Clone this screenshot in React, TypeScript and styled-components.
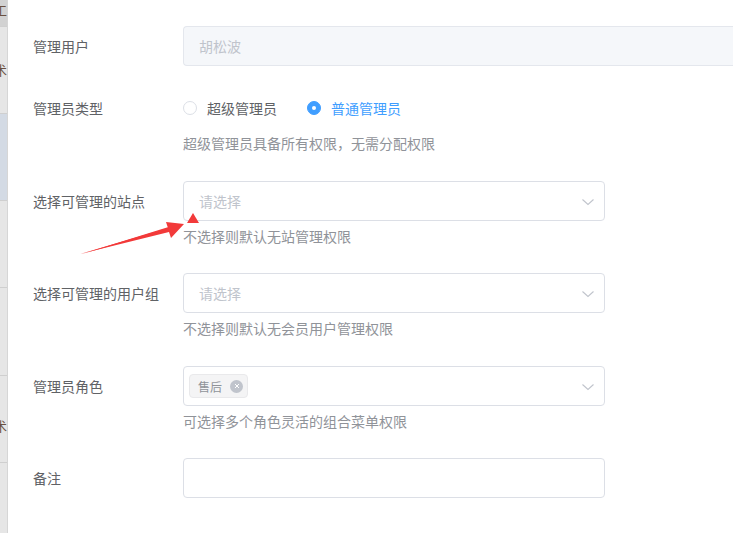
import React from "react";
import styled, { createGlobalStyle } from "styled-components";

const Global = createGlobalStyle`
  html, body { margin: 0; padding: 0; background: #fff; }
  body { font-family: "Noto Sans CJK SC", "Noto Sans", sans-serif; overflow: hidden; }
`;

const Page = styled.div`
  display: flex;
  width: 733px;
  height: 533px;
  overflow: hidden;
  position: relative;
`;

const Strip = styled.div`
  width: 8px;
  flex: none;
  display: flex;
  flex-direction: column;
  background: #e4e4e4;
  border-right: 1px solid #d6d6d6;
  box-sizing: border-box;
`;

const StripCell = styled.div<{ $h: number; $bg?: string }>`
  height: ${(p) => p.$h}px;
  flex: none;
  background: ${(p) => p.$bg || "#e6e6e6"};
  border-bottom: 1px solid #cfcfcf;
  box-sizing: border-box;
  position: relative;
  overflow: hidden;
  font-size: 13px;
  color: #6a5040;
  display: flex;
  align-items: center;
`;

const StripGlyph = styled.span<{ $top?: number }>`
  position: absolute;
  left: -6px;
  top: ${(p) => p.$top ?? 0}px;
  line-height: 1;
`;

const Panel = styled.div`
  flex: 1;
  padding: 26px 0 0 25px;
  box-sizing: border-box;
`;

const Item = styled.div<{ $mb?: number }>`
  display: flex;
  margin-bottom: ${(p) => p.$mb ?? 22}px;
`;

const Label = styled.div`
  width: 150px;
  flex: none;
  font-size: 14px;
  color: #606266;
  line-height: 40px;
`;

const Content = styled.div`
  flex: 1;
  display: flex;
  flex-direction: column;
`;

const InputBox = styled.div<{ $disabled?: boolean; $wide?: boolean }>`
  box-sizing: border-box;
  height: 40px;
  width: ${(p) => (p.$wide ? "560px" : "422px")};
  border: 1px solid ${(p) => (p.$disabled ? "#e4e7ed" : "#dcdfe6")};
  border-right-width: ${(p) => (p.$wide ? 0 : 1)}px;
  border-radius: ${(p) => (p.$wide ? "4px 0 0 4px" : "4px")};
  background: ${(p) => (p.$disabled ? "#f5f7fa" : "#fff")};
  display: flex;
  align-items: center;
  padding: 0 15px;
  font-size: 14px;
  color: #c0c4cc;
  position: relative;
`;

const SelectBox = styled(InputBox)`
  padding-left: 15px;
`;

const TagBox = styled(InputBox)`
  padding-left: 5px;
`;

const Arrow = styled.svg`
  position: absolute;
  right: 9px;
  top: 14px;
`;

const Help = styled.div`
  font-size: 14px;
  color: #909399;
  line-height: 22px;
  margin-top: 4px;
  padding-bottom: 5px;
`;

const RadioGroup = styled.div`
  display: flex;
  align-items: center;
  height: 40px;
`;

const Radio = styled.label<{ $checked?: boolean }>`
  display: flex;
  align-items: center;
  margin-right: 30px;
  font-size: 14px;
  color: ${(p) => (p.$checked ? "#409eff" : "#606266")};
`;

const RadioDot = styled.span<{ $checked?: boolean }>`
  width: 14px;
  height: 14px;
  box-sizing: border-box;
  border-radius: 50%;
  border: 1px solid ${(p) => (p.$checked ? "#409eff" : "#dcdfe6")};
  background: ${(p) => (p.$checked ? "#409eff" : "#fff")};
  margin-right: 10px;
  display: flex;
  align-items: center;
  justify-content: center;
  &::after {
    content: "";
    width: 4px;
    height: 4px;
    border-radius: 50%;
    background: #fff;
    display: ${(p) => (p.$checked ? "block" : "none")};
  }
`;

const Tag = styled.span`
  display: inline-flex;
  align-items: center;
  height: 24px;
  box-sizing: border-box;
  padding: 0 4px 0 8px;
  background: #f4f4f5;
  border: 1px solid #e9e9eb;
  border-radius: 4px;
  font-size: 12px;
  color: #909399;
`;

const TagClose = styled.span`
  width: 13px;
  height: 13px;
  border-radius: 50%;
  background: #c0c4cc;
  margin-left: 8px;
  display: inline-flex;
  align-items: center;
  justify-content: center;
`;

const Annotation = styled.svg`
  position: absolute;
  left: 0;
  top: 0;
  pointer-events: none;
`;

const Chevron = () => (
  <Arrow width="14" height="12" viewBox="0 0 14 12">
    <path d="M1.5 3.5 L7 8.5 L12.5 3.5" fill="none" stroke="#c0c4cc" strokeWidth="1.1" />
  </Arrow>
);

export default function App() {
  return (
    <>
      <Global />
      <Page>
        <Strip>
          <StripCell $h={27} $bg="#d2d2d2">
            <StripGlyph $top={3}>工</StripGlyph>
          </StripCell>
          <StripCell $h={87}>
            <StripGlyph $top={36}>术</StripGlyph>
          </StripCell>
          <StripCell $h={87} $bg="#d3dae4" />
          <StripCell $h={87} />
          <StripCell $h={88} />
          <StripCell $h={87}>
            <StripGlyph $top={43}>术</StripGlyph>
          </StripCell>
          <StripCell $h={71} />
        </Strip>
        <Panel>
          <Item $mb={22}>
            <Label>管理用户</Label>
            <Content>
              <InputBox $disabled $wide>胡松波</InputBox>
            </Content>
          </Item>
          <Item>
            <Label>管理员类型</Label>
            <Content>
              <RadioGroup>
                <Radio>
                  <RadioDot />
                  超级管理员
                </Radio>
                <Radio $checked>
                  <RadioDot $checked />
                  普通管理员
                </Radio>
              </RadioGroup>
              <Help>超级管理员具备所有权限，无需分配权限</Help>
            </Content>
          </Item>
          <Item $mb={21}>
            <Label>选择可管理的站点</Label>
            <Content>
              <SelectBox>
                请选择
                <Chevron />
              </SelectBox>
              <Help>不选择则默认无站管理权限</Help>
            </Content>
          </Item>
          <Item>
            <Label>选择可管理的用户组</Label>
            <Content>
              <SelectBox>
                请选择
                <Chevron />
              </SelectBox>
              <Help>不选择则默认无会员用户管理权限</Help>
            </Content>
          </Item>
          <Item $mb={21}>
            <Label>管理员角色</Label>
            <Content>
              <TagBox>
                <Tag>
                  售后
                  <TagClose>
                    <svg width="8" height="8" viewBox="0 0 8 8">
                      <path d="M2 2 L6 6 M6 2 L2 6" stroke="#fff" strokeWidth="1" />
                    </svg>
                  </TagClose>
                </Tag>
                <Chevron />
              </TagBox>
              <Help>可选择多个角色灵活的组合菜单权限</Help>
            </Content>
          </Item>
          <Item>
            <Label>备注</Label>
            <Content>
              <InputBox />
            </Content>
          </Item>
        </Panel>
        <Annotation width="733" height="533" viewBox="0 0 733 533">
          <path d="M80 254 L168 228 L166 222 L184 224 L171 238 L169 232 Z" fill="#f23a3a" />
          <path d="M80 254.5 L169 229.5 L168.5 227 Z" fill="#f23a3a" />
          <path d="M193 213 L199 223 L187 223 Z" fill="#f23a3a" />
        </Annotation>
      </Page>
    </>
  );
}
